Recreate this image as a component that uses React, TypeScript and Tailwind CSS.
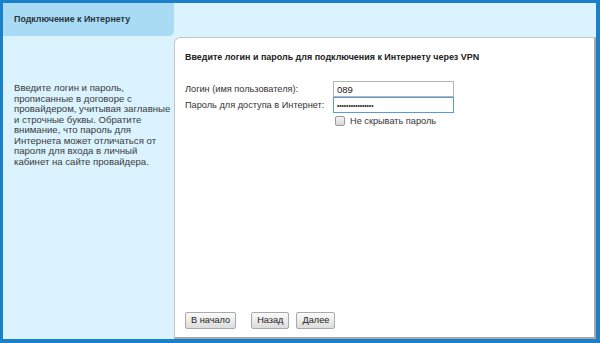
import React from 'react';

const hint = [
  'Введите логин и пароль,',
  'прописанные в договоре с',
  'провайдером, учитывая заглавные',
  'и строчные буквы. Обратите',
  'внимание, что пароль для',
  'Интернета может отличаться от',
  'пароля для входа в личный',
  'кабинет на сайте провайдера.',
];

function Btn({ label }: { label: string }) {
  return (
    <button className="h-[17px] px-[5px] rounded-[2px] border border-[#a9a9a9] bg-gradient-to-b from-[#fbfbfb] to-[#dcdcdc] text-[9.2px] leading-none text-[#222]">
      {label}
    </button>
  );
}

export default function App() {
  return (
    <div
      className="w-[600px] h-[343px] bg-[#1a80c8] pt-[3px] pl-[3px] pr-[4px] pb-[4px] text-[#333]"
      style={{ fontFamily: '"Liberation Sans", Arial, sans-serif' }}
    >
      <div className="flex h-full bg-[#daf3fe]">
        <div className="w-[171px] flex flex-col">
          <div className="h-[33px] bg-[#a9dcf4] rounded-br-[5px] flex items-center pl-[11px] text-[8.9px] font-bold text-[#263540]">
            Подключение к Интернету
          </div>
          <div className="pt-[47px] pl-[11px] text-[9.6px] leading-[10.5px] text-[#3a3a3a]">
            {hint.map((l) => (
              <div key={l} className="whitespace-nowrap">{l}</div>
            ))}
          </div>
        </div>
        <div className="flex-1 flex flex-col">
          <div className="h-[34px]" />
          <div className="flex-1 flex flex-col bg-white rounded-tl-[6px] border-l border-t border-[#c4c4c4] border-r-2 border-b-2 border-r-[#a8a8a8] border-b-[#a8a8a8] pl-[10px] pt-[13px] pb-[8px]">
            <div className="text-[8.95px] font-bold text-[#222] whitespace-nowrap">
              Введите логин и пароль для подключения к Интернету через VPN
            </div>
            <div className="mt-[17px] flex flex-col text-[9.2px] text-[#333]">
              <div className="flex items-center h-[16px]">
                <span className="w-[148px] whitespace-nowrap">Логин (имя пользователя):</span>
                <input
                  readOnly
                  value="089"
                  className="w-[121px] h-[16px] border border-[#b5b5b5] px-[3px] text-[9.5px] text-[#222] outline-none"
                />
              </div>
              <div className="flex items-center h-[16px]">
                <span className="w-[148px] whitespace-nowrap">Пароль для доступа в Интернет:</span>
                <input
                  readOnly
                  type="password"
                  value="0123456789abcdef"
                  className="w-[121px] h-[16px] border border-[#5b9bd5] px-[3px] text-[6.5px] text-[#222] outline-none"
                />
              </div>
              <label className="flex items-center h-[16px] pl-[150px] gap-[5px]">
                <span className="w-[10px] h-[10px] border border-[#9a9a9a] rounded-[2px] bg-gradient-to-b from-[#f4f4f4] to-[#d9d9d9]" />
                <span>Не скрывать пароль</span>
              </label>
            </div>
            <div className="mt-auto flex items-center">
              <Btn label="В начало" />
              <div className="w-[15px]" />
              <Btn label="Назад" />
              <div className="w-[7px]" />
              <Btn label="Далее" />
            </div>
          </div>
        </div>
      </div>
    </div>
  );
}
